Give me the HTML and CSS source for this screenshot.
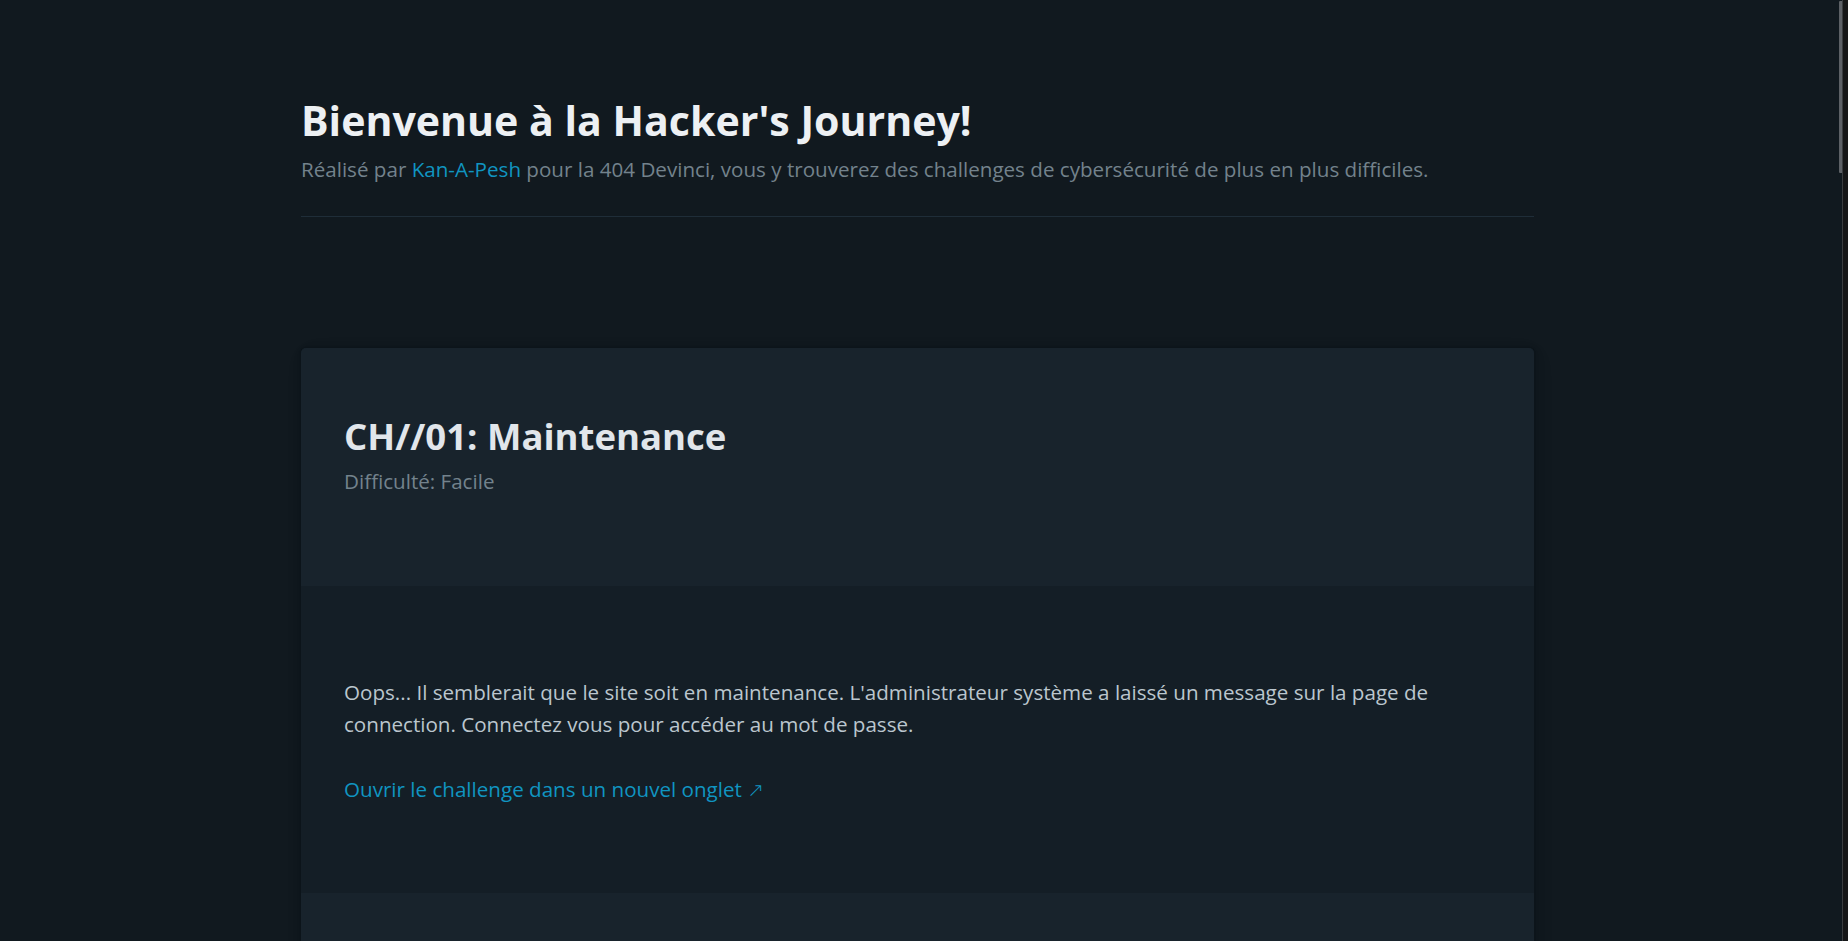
FILE: index.html
```html
<!DOCTYPE html>
<html lang="fr">
<head>
<meta charset="utf-8">
<title>Hacker's Journey</title>
<link rel="stylesheet" href="styles.css">
</head>
<body>
  <header class="site-header container">
    <hgroup class="intro">
      <h1 class="intro-title">Bienvenue à la Hacker's Journey!</h1>
      <p class="intro-sub">Réalisé par <a class="link" href="#">Kan-A-Pesh</a> pour la 404 Devinci, vous y trouverez des challenges de cybersécurité de plus en plus difficiles.</p>
    </hgroup>
    <hr class="divider">
  </header>
  <main class="container challenges">
    <article class="challenge">
      <header class="challenge-head">
        <hgroup>
          <h2 class="challenge-title">CH//01: Maintenance</h2>
          <p class="challenge-level">Difficulté: Facile</p>
        </hgroup>
      </header>
      <div class="challenge-body">
        <p class="challenge-text">Oops... Il semblerait que le site soit en maintenance. L'administrateur système a laissé un message sur la page de connection. Connectez vous pour accéder au mot de passe.</p>
        <p class="challenge-cta"><a class="link" href="#">Ouvrir le challenge dans un nouvel onglet <span class="arrow">↗</span></a></p>
      </div>
      <footer class="challenge-foot"></footer>
    </article>
  </main>
  <div class="scrollbar"><div class="scrollbar-thumb"></div></div>
</body>
</html>
```
FILE: styles.css
```css
html {
  overflow: hidden;
  background: #11191f;
}
body {
  margin: 0;
  padding: 0 13px 0 0;
  background: #11191f;
  color: #bbc6ce;
  font-family: "Open Sans", "Noto Sans", sans-serif;
  font-size: 20.6px;
  line-height: 32.7px;
}
.container {
  width: 1233px;
  margin: 0 auto;
}
.link {
  color: #1095c1;
  text-decoration: none;
}

/* page header */
.site-header {
  padding-top: 96.6px;
}
.intro {
  margin: 0;
  display: flex;
  flex-direction: column;
  gap: 10.2px;
}
.intro-title {
  margin: 0;
  font-size: 41.1px;
  line-height: 46.2px;
  font-weight: 700;
  color: #edf0f3;
}
.intro-sub {
  margin: 0;
  color: #73828c;
}
.divider {
  margin: 30.3px 0 0;
  height: 0;
  border: 0;
  border-top: 1px solid #1f2d38;
}

/* challenges */
.challenges {
  padding-top: 131px;
}
.challenge {
  background: #141e26;
  border-radius: 5px;
  overflow: hidden;
  box-shadow:
    0.3px 0.6px 3.8px rgba(0,0,0,0.017),
    0.7px 1.5px 8.8px rgba(0,0,0,0.024),
    1.4px 2.7px 16.4px rgba(0,0,0,0.03),
    2.5px 4.9px 24px rgba(0,0,0,0.036),
    0 0 0 1.4px rgba(0,0,0,0.015);
}
.challenge-head {
  background: #18232c;
  padding: 66.8px 43px 88.3px;
}
.challenge-head hgroup {
  margin: 0;
  display: flex;
  flex-direction: column;
  gap: 8.2px;
}
.challenge-title {
  margin: 0;
  font-size: 36.5px;
  line-height: 42px;
  font-weight: 700;
  color: #e1e6eb;
}
.challenge-level {
  margin: 0;
  color: #73828c;
}
.challenge-body {
  padding: 89.6px 43px 87.3px;
}
.challenge-text {
  margin: 0 0 32px;
}
.challenge-cta {
  margin: 0;
  height: 32.7px;
}
.arrow {
  font-family: "DejaVu Sans", sans-serif;
  font-weight: 200;
  font-size: 20px;
  line-height: 1;
}
.challenge-foot {
  background: #18232c;
  height: 130px;
}

/* fake window scrollbar */
.scrollbar {
  position: fixed;
  top: 0;
  right: 0;
  bottom: 0;
  width: 9px;
  background: #11191f;
}
.scrollbar::after {
  content: "";
  position: absolute;
  top: 0;
  bottom: 0;
  right: 0;
  width: 5px;
  background: #161718;
  border-left: 1px solid #3a3d40;
}
.scrollbar-thumb {
  position: absolute;
  top: 1px;
  left: 0;
  width: 4px;
  height: 172px;
  background: #5d6166;
  border-radius: 1px;
}
```
